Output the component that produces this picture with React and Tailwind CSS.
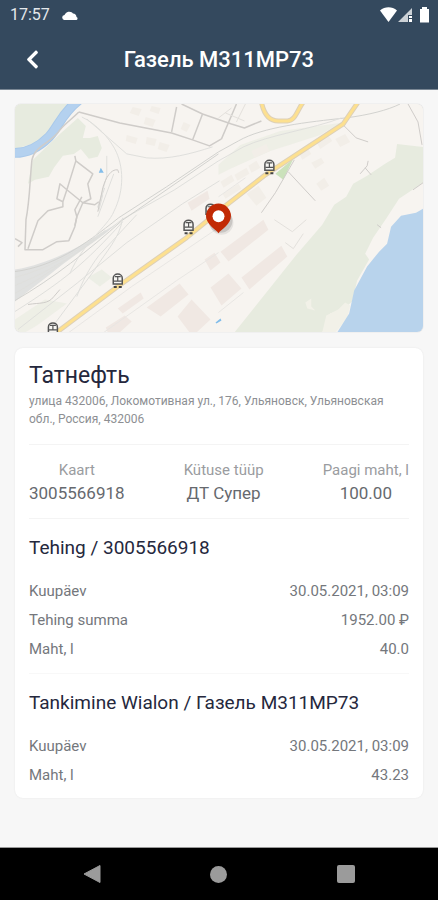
import { FaChevronLeft } from "react-icons/fa";

const fuelInfo = [
	{ label: "Kaart", value: "3005566918" },
	{ label: "Kütuse tüüp", value: "ДТ Супер" },
	{ label: "Paagi maht, l", value: "100.00" },
];

const sections = [
	{
		title: "Tehing / 3005566918",
		rows: [
			["Kuupäev", "30.05.2021, 03:09"],
			["Tehing summa", "1952.00 ₽"],
			["Maht, l", "40.0"],
		],
	},
	{
		title: "Tankimine Wialon / Газель М311МР73",
		rows: [
			["Kuupäev", "30.05.2021, 03:09"],
			["Maht, l", "43.23"],
		],
	},
];

// x, y of every station along the main road
const stations = [
	[270, 167],
	[211, 211],
	[189, 227],
	[118, 281],
	[53, 330],
];

function StatusBar() {
	return (
		<div className="flex h-[30px] items-center justify-between pl-[10px] pr-2">
			<div className="flex items-center gap-3">
				<span className="text-base text-[#e4e8ec]">17:57</span>
				<svg width="16" height="10" viewBox="0 0 16 10" fill="currentColor">
					<path d="M3 10a2.500 2.500 0 0 1-.5-5A5 5 0 0 1 11 3.500 4 4 0 0 1 14.500 7 1.600 1.600 0 0 1 14.500 10z" />
				</svg>
			</div>
			<svg width="50" height="16" viewBox="0 0 50 16" fill="currentColor">
				<path d="M0 3.500C5-.8 12-.8 17 3.500L8.500 15z" />
				<path d="M18 15 32 1v7h-4v7z" opacity=".75" />
				<path d="M29 9h3v2h-3zM29 12h3v3h-3z" />
				<path d="M40 2h2V0h5v2h2v13.500h-9z" />
			</svg>
		</div>
	);
}

function Station({ x, y }) {
	return (
		<g transform={`translate(${x} ${y})`}>
			<path d="M-4.500 3.500v-6a4.500 4 0 0 1 9 0v6z" fill="#f7f6f3" stroke="#555" strokeWidth="1.500" />
			<path d="M-3-4h6M0-4v4M-4 .5h8" stroke="#555" strokeWidth="1.200" />
			<path d="M-4 6.500h3M1 6.500h3" stroke="#444" strokeWidth="2" />
		</g>
	);
}

function StationMap() {
	return (
		<div className="overflow-hidden rounded-md shadow-[0_0_1px_rgba(0,0,0,0.3)]">
			<svg className="block w-full" viewBox="15 104 409 229" role="img" aria-label="Map">
				<rect x="15" y="104" width="409" height="229" fill="#f7f4f0" />

				{/* parks and woods */}
				<g fill="#e7ebdf">
					<path d="M15 104h52l-7 20-18 17-27 8z" />
					<path d="M33 160 60 134l18-16 8 8-3 12 7 0 8-2 4 12-4 9-9 2-8-10-7 5-11 2-9 12-5 9-14 3-7 4z" />
					<path d="M424 147l-26-3-2 14-10 6-18 12-14 8-7 13-12 8-12 20-25 29-63 79h88l8-19 14-5 8-7 5-21 12-21-4-6 8-16 13-19 13-20 24-16z" />
					<path d="M15 320l30-20 22 4-30 22-12 7H15zM219 165l22-20 40-14 60-8-20 12-50 16-40 18-12 6z" opacity=".6" />
					<path d="M88 278l14-8 10 8-12 9z" opacity=".7" />
				</g>
				<path d="M276 174l18-15-10 21z" fill="#cbe2bb" />
				<path d="M323 333l4-17 12-6 7-7 5 3-3 13-12 14zM306 303l6-4v8l4 4-8-2z" fill="#f2f1e8" />

				{/* buildings */}
				<g fill="#f0e8e3">
					<path d="M147 308l33-24 9 11-28 22zM178 317l14-17 19 20-14 13h-7zM221 252l43-32 5 10-40 32zM242 278l40-32 6 11-38 33zM211 288l18-14 13 15-20 17zM205 260l10-7 6 10-10 8zM118 309l23-16 3 6-21 15zM106 328l19-12 7 6-12 11h-12zM188 203l20-12 2 8-18 12z" />
				</g>
				<g fill="#f2eee8">
					<path d="M221 182l11-7 3 6-11 7zM235 175l12-7 3 6-12 7zM249 166l8-5 4 7-9 5zM252 151l15-7 3 7-15 7zM223 194l16-10 3 5-16 10zM247 194l12-8 8 12-10 8zM317 142l12-7 4 6-12 8zM300 154l9-5 3 5-9 6zM312 163l10-5 3 5-9 6zM317 184l8-6 5 8-8 5zM336 139l10-5 5 8-10 5z" />
					<path d="M133 107l9 2-3 7-9-3zM146 117l10 3-3 7-9-3zM127 135l11 3-2 6-10-3zM147 137l10 2-2 7-9-2zM160 142l10 3-3 7-9-3zM152 106l9 2-2 6-9-3zM184 122l7 3-4 7-6-3z" />
				</g>

				{/* water */}
				<path d="M15 153C30 153 40 146 49 137S61 114 79 100" fill="none" stroke="#a9c9ea" strokeWidth="10" />
				<path d="M15 153C30 153 40 146 49 137S61 114 79 100" fill="none" stroke="#b4d1ef" strokeWidth="8" />
				<path d="M338 333l12-19 5-23 13-24 12-15 8-8 4-17 10-11 15-3 7-4v124z" fill="#b8d3ec" />
				<path d="M101 168l3 5h-5zM216 323l5-4 1 2-5 3z" fill="#82bdea" />

				{/* rail yard */}
				<path d="M15 270c28-5 54-16 85-36l17-10c-21 19-46 33-67 51l-35 27z" fill="#e0e1e0" />
				<g fill="none" stroke="#dfdfdc" strokeWidth="1">
					<path d="M15 272c38-5 68-25 104-54l48-31 52-35 20-11c24-14 70-19 107-23 24-3 43-8 55-14" stroke="#d2d2cf" />
					<path d="M15 286c48-20 76-42 107-66l53-30 44-29 25-14c25-12 70-18 98-29" />
					<path d="M15 301c38-22 75-51 107-80l97-67" stroke="#d2d2cf" />
					<path d="M15 312c49-31 70-48 108-90M15 278c35-10 60-24 90-47M15 294c34-20 58-38 91-63" />
					<path d="M82 117c16 8 27 21 33 32 9 17 10 41-1 63-6 15-31 31-44 62M87 119l40 35 20 4c22 2 44-4 66-11" />
					<path d="M137 215l-38 41c-10 13-17 27-22 41M123 218c-3 21-17 34-28 52l-40 54M18 330l60-47 49-40 56-39 37-23" />
					<path d="M107 156v20l-9 32M114 174l-16 43M105 188l-7 19M103 195l-4 16" />
					<path d="M69 333l63-46 87-59M104 333l73-52 42-28M219 313l25-20M219 197l27-19" stroke="#e8e6e3" />
				</g>

				{/* side streets */}
				<g fill="none" stroke="#cfccc9" strokeWidth="1" strokeLinejoin="round">
					<path d="M79 112c-8 8-13 11-19 18-8 13-25 15-28 30-2 17-2 40-6 60l-1 30h18l14-8 12-1 6-14 2-10-2-7 7-13M15 239l7 4-4 4" strokeWidth="1.500" />
					<path d="M79 112l41 11 52 10 21 7 17 6 12-7M177 107l-5 25M182 104l21 10-10 26M203 114l29 10 13 4 17-7M237 104l-15 35" strokeWidth="1.500" />
					<path d="M75 156l1 5 17 13-5 10 3 15-8 4-16-13-7-6-3 15 6 3 4-12 9-29M83 203l12 2 4-3M83 203l-6 14-2 9M63 202v5l-15 4-10 10-10 28" strokeWidth="1.500" />
					<path d="M98 212l5-24c3-10 8-19 15-18l1 3" />
					<path d="M344 125l13 13 12 4M289 172l27 29M295 160l-19 33-14 20M409 104l10 18 4 23" />
					<path d="M361 174l7-8 1-5M366 168l6 7M378 225l4 3M414 190l10-7" />
					<path d="M28 305c12-2 20 0 26-8l6-7" />
					<path d="M219 118l13-10M226 113l19 8M246 104l-9 18M275 220l18 12 14-12M286 243l8 6 10-15" stroke="#e3e0dc" />
				</g>

				{/* main roads */}
				<g fill="none" strokeLinejoin="round">
					<path d="M262 102c2 10 7 19 17 19h9c8 0 10-11 16-19M54 335l64-48 69-49 39-32 40-31 78-51 15-22" stroke="#ddd0b8" strokeWidth="5" />
					<path d="M262 102c2 10 7 19 17 19h9c8 0 10-11 16-19M54 335l64-48 69-49 39-32 40-31 78-51 15-22" stroke="#fde08f" strokeWidth="3" />
				</g>

				{stations.map(([x, y]) => (
					<Station key={x} x={x} y={y} />
				))}

				{/* vehicle pin */}
				<ellipse cx="222" cy="223" rx="12" ry="12" fill="#000" opacity=".07" />
				<ellipse cx="221" cy="221" rx="12" ry="12" fill="#000" opacity=".12" />
				<path d="M219 233.500c-3-4-12.500-9-12.500-17.200a12.500 12.500 0 0 1 25 0c0 8.200-9.500 13.200-12.500 17.200z" fill="#c22a05" />
				<circle cx="219" cy="216.500" r="6" fill="#fff" />
			</svg>
		</div>
	);
}

export default function App() {
	return (
		<div className="flex min-h-screen flex-col bg-[#f7f7f7] font-['Roboto',sans-serif] text-[#74777c]">
			<header className="border-b border-[#7a8794] bg-[#34495e] text-white">
				<StatusBar />
				<div className="grid h-[59px] grid-cols-[48px_1fr_48px] items-center px-2">
					<button type="button" aria-label="Back" className="flex h-12 items-center justify-center">
						<FaChevronLeft size={21} />
					</button>
					<h1 className="text-center text-[22px] font-medium">Газель М311МР73</h1>
				</div>
			</header>

			<main className="flex flex-1 flex-col gap-4 px-[15px] py-[14px]">
				<StationMap />

				<div className="rounded-lg bg-white px-[14px] pb-2 pt-3 shadow-[0_0_2px_rgba(0,0,0,0.08)]">
					<h2 className="text-[23px] leading-8 text-[#25283d]">Татнефть</h2>
					<p className="text-xs leading-[18px] text-[#8d8f93]">
						улица 432006, Локомотивная ул., 176, Ульяновск, Ульяновская обл., Россия, 432006
					</p>

					<dl className="mt-4 flex justify-between border-y border-[#f4f4f4] py-[13px] text-center">
						{fuelInfo.map((item) => (
							<div key={item.label}>
								<dt className="text-[15px] leading-6 text-[#9a9ca0]">{item.label}</dt>
								<dd className="text-[17px] leading-[23px] text-[#66696e]">{item.value}</dd>
							</div>
						))}
					</dl>

					{sections.map((section) => (
						<section key={section.title} className="border-b border-[#f8f8f8] pb-[9px] last:border-0 last:pb-0">
							<h3 className="py-4 text-[19px] leading-[26px] text-[#25283d]">{section.title}</h3>
							<dl>
								{section.rows.map(([label, value]) => (
									<div key={label} className="flex justify-between text-[15px] leading-[29px]">
										<dt>{label}</dt>
										<dd>{value}</dd>
									</div>
								))}
							</dl>
						</section>
					))}
				</div>
			</main>

			<nav className="flex h-[53px] items-center justify-around border-t border-[#999] bg-black px-7 text-[#9b9b9b]">
				<button type="button" aria-label="System back" className="flex h-12 w-12 items-center justify-center">
					<svg width="18" height="18" viewBox="0 0 18 18" fill="currentColor">
						<path d="M1 9 17 0.500v17z" stroke="currentColor" strokeLinejoin="round" />
					</svg>
				</button>
				<button type="button" aria-label="Home" className="flex h-12 w-12 items-center justify-center">
					<span className="h-[17px] w-[17px] rounded-full bg-current" />
				</button>
				<button type="button" aria-label="Recent apps" className="flex h-12 w-12 items-center justify-center">
					<span className="h-[18px] w-[18px] rounded-xs bg-current" />
				</button>
			</nav>
		</div>
	);
}
